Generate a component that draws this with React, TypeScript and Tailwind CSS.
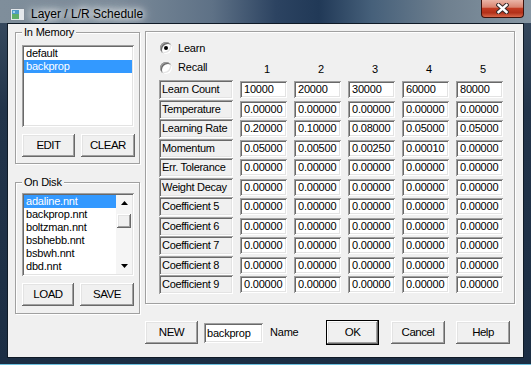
import React from "react";

const sunken =
  "shadow-[inset_1px_1px_0_#a0a0a0,inset_-1px_-1px_0_#ffffff,inset_2px_2px_0_#696969,inset_-2px_-2px_0_#e3e3e3]";
const raised =
  "shadow-[inset_-1px_-1px_0_#696969,inset_1px_1px_0_#ffffff,inset_-2px_-2px_0_#a0a0a0,inset_2px_2px_0_#e3e3e3]";

const rows: [string, string[]][] = [
  ["Learn Count", ["10000", "20000", "30000", "60000", "80000"]],
  ["Temperature", ["0.00000", "0.00000", "0.00000", "0.00000", "0.00000"]],
  ["Learning Rate", ["0.20000", "0.10000", "0.08000", "0.05000", "0.05000"]],
  ["Momentum", ["0.05000", "0.00500", "0.00250", "0.00010", "0.00000"]],
  ["Err. Tolerance", ["0.00000", "0.00000", "0.00000", "0.00000", "0.00000"]],
  ["Weight Decay", ["0.00000", "0.00000", "0.00000", "0.00000", "0.00000"]],
  ["Coefficient 5", ["0.00000", "0.00000", "0.00000", "0.00000", "0.00000"]],
  ["Coefficient 6", ["0.00000", "0.00000", "0.00000", "0.00000", "0.00000"]],
  ["Coefficient 7", ["0.00000", "0.00000", "0.00000", "0.00000", "0.00000"]],
  ["Coefficient 8", ["0.00000", "0.00000", "0.00000", "0.00000", "0.00000"]],
  ["Coefficient 9", ["0.00000", "0.00000", "0.00000", "0.00000", "0.00000"]],
];

const diskFiles = ["adaline.nnt", "backprop.nnt", "boltzman.nnt", "bsbhebb.nnt", "bsbwh.nnt", "dbd.nnt"];

function Btn({ children, className = "" }: { children: React.ReactNode; className?: string }) {
  return (
    <div
      className={`flex h-[23px] items-center justify-center bg-[#f0f0f0] text-[11.5px] tracking-[-0.5px] ${raised} ${className}`}
    >
      {children}
    </div>
  );
}

function Group({
  label,
  className = "",
  children,
}: {
  label?: string;
  className?: string;
  children: React.ReactNode;
}) {
  return (
    <div
      className={`relative border border-[#a0a0a0] shadow-[inset_1px_1px_0_#ffffff,1px_1px_0_#ffffff] ${className}`}
    >
      {label && (
        <span className="absolute left-[6px] top-[-8px] bg-[#f0f0f0] px-[2px] leading-[14px]">{label}</span>
      )}
      {children}
    </div>
  );
}

function Radio({ label, checked }: { label: string; checked?: boolean }) {
  return (
    <div className="flex items-center gap-[6px] pl-[1px]">
      <span className={`flex h-[12px] w-[12px] items-center justify-center rounded-full bg-white ${sunken}`}>
        {checked && <span className="h-[4px] w-[4px] rounded-full bg-black" />}
      </span>
      <span>{label}</span>
    </div>
  );
}

function Arrow({ up }: { up?: boolean }) {
  return (
    <div className="flex h-[16px] items-center justify-center">
      <svg width="7" height="4" viewBox="0 0 7 4">
        <path d={up ? "M3.5 0 L7 4 L0 4 Z" : "M0 0 L7 0 L3.5 4 Z"} fill="#000" />
      </svg>
    </div>
  );
}

export default function App() {
  return (
    <div className="flex h-[365px] w-[531px] flex-col overflow-hidden border-b border-b-[#6cc0de] bg-[linear-gradient(180deg,#3a4d62_0%,#22344a_30%,#1c2e44_100%)] pb-[6px] font-['Liberation_Sans',Arial,sans-serif] text-[11px] tracking-[-0.2px] text-black">
      {/* title bar */}
      <div className="flex h-[23px] shrink-0 items-start bg-[linear-gradient(90deg,#7f8e9b_0%,#7b8b99_22%,#5e7186_40%,#2c4361_52%,#213957_60%,#46607a_70%,#6f808f_84%,#8696a3_100%)]">
        <div className="flex items-center gap-[6px] pl-[10px] pt-[5px]">
          <svg width="15" height="13" viewBox="0 0 15 13">
            <rect x="0.5" y="0.5" width="14" height="12" fill="#e4e8ec" stroke="#7d8a96" />
            <rect x="2" y="2" width="7" height="9" fill="#4f9ac8" />
            <rect x="2" y="6" width="7" height="5" fill="#5fae6a" />
            <rect x="3" y="3" width="2" height="2" fill="#a6d4f0" />
          </svg>
          <span className="text-[12px] tracking-[0px] [text-shadow:0_0_6px_#ffffff,0_0_10px_#ffffff,0_0_14px_#ffffff]">
            Layer / L/R Schedule
          </span>
        </div>
        <div className="ml-auto mr-[7px] flex h-[18px] w-[43px] items-center justify-center rounded-b-[4px] border border-t-0 border-[#3d120c] bg-[linear-gradient(180deg,#eab5a7_0%,#d98470_42%,#c23b22_50%,#b23019_75%,#d8684b_100%)]">
          <svg width="13" height="11" viewBox="0 0 13 11">
            <path d="M2.5 2 L10.5 9 M10.5 2 L2.5 9" stroke="#3a2a2a" strokeWidth="4.5" strokeLinecap="square" />
            <path d="M2.5 2 L10.5 9 M10.5 2 L2.5 9" stroke="#ffffff" strokeWidth="2.4" strokeLinecap="square" />
          </svg>
        </div>
      </div>

      {/* client area */}
      <div className="mx-[7px] flex flex-1 border border-[#0f1a26] bg-[#f0f0f0] pl-[7px] pt-[7px]">
        {/* left column */}
        <div className="mt-[1px] flex w-[125px] flex-col">
          <Group label="In Memory" className="h-[132px] pl-[6px] pt-[12px]">
            <div className={`h-[82px] w-[112px] bg-white p-[2px] ${sunken}`}>
              <div className="h-[13px] pl-[2px] leading-[13px]">default</div>
              <div className="h-[13px] bg-[#3399ff] pl-[2px] leading-[13px] text-white">backprop</div>
            </div>
            <div className="mt-[7px] flex gap-[6px]">
              <Btn className="w-[53px]">EDIT</Btn>
              <Btn className="w-[54px]">CLEAR</Btn>
            </div>
          </Group>

          <Group label="On Disk" className="mt-[18px] h-[132px] pl-[6px] pt-[10px]">
            <div className={`flex h-[83px] w-[112px] bg-white p-[2px] ${sunken}`}>
              <div className="flex-1 overflow-hidden">
                {diskFiles.map((f, i) => (
                  <div
                    key={f}
                    className={`h-[13px] pl-[2px] leading-[13px] ${i === 0 ? "bg-[#3399ff] text-white" : ""}`}
                  >
                    {f}
                  </div>
                ))}
              </div>
              <div className="flex w-[16px] flex-col bg-[#f5f5f5]">
                <Arrow up />
                <div className={`mx-[1px] mt-[3px] h-[14px] bg-[#f0f0f0] ${raised}`} />
                <div className="flex-1" />
                <Arrow />
              </div>
            </div>
            <div className="mt-[7px] flex gap-[6px]">
              <Btn className="w-[52px]">LOAD</Btn>
              <Btn className="w-[54px]">SAVE</Btn>
            </div>
          </Group>
        </div>

        {/* right column */}
        <div className="ml-[5px] flex w-[370px] flex-col">
          <Group className="h-[273px] pl-[13px] pt-[6px]">
            <div className="flex h-[20px] items-center">
              <Radio label="Learn" checked />
            </div>
            <div className="grid grid-cols-[74px_repeat(5,47px)] grid-rows-[22px] auto-rows-[19.5px] gap-x-[7px]">
              <div className="flex items-center pb-[3px]">
                <Radio label="Recall" />
              </div>
              {[1, 2, 3, 4, 5].map((n) => (
                <div key={n} className="flex items-center justify-center pl-[7px]">
                  {n}
                </div>
              ))}
              {rows.map(([label, vals]) => (
                <React.Fragment key={label}>
                  <div
                    className={`h-[19px] self-start whitespace-nowrap bg-[#f0f0f0] pl-[3px] leading-[19px] tracking-[-0.3px] ${sunken}`}
                  >
                    {label}
                  </div>
                  {vals.map((v, i) => (
                    <div key={i} className={`h-[17px] self-center bg-white pl-[4px] leading-[17px] ${sunken}`}>
                      {v}
                    </div>
                  ))}
                </React.Fragment>
              ))}
            </div>
          </Group>

          <div className="mt-[17px] flex h-[23px] items-center">
            <Btn className="w-[53px]">NEW</Btn>
            <div className={`ml-[6px] h-[20px] w-[59px] bg-white pl-[3px] leading-[20px] ${sunken}`}>backprop</div>
            <span className="ml-[7px] w-[56px]">Name</span>
            <div className="w-[53px] border border-black">
              <Btn className="h-[21px] w-full">OK</Btn>
            </div>
            <Btn className="ml-[12px] w-[54px]">Cancel</Btn>
            <Btn className="ml-[11px] w-[54px]">Help</Btn>
          </div>
        </div>
      </div>
    </div>
  );
}
